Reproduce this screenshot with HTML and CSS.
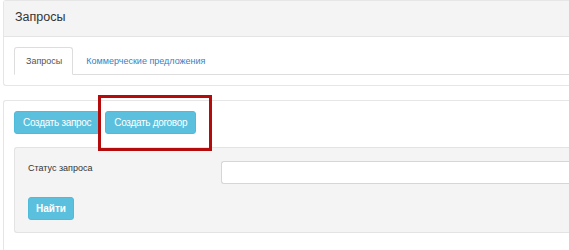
FILE: index.html
```html
<!DOCTYPE html>
<html lang="ru">
<head>
  <meta charset="UTF-8">
  <title>Запросы</title>
  <link rel="stylesheet" href="styles.css">
</head>
<body>
  <div class="page">

    <div class="panel">
      <div class="panel-heading">Запросы</div>
      <div class="panel-body">
        <ul class="tabs">
          <li class="tab active">Запросы</li>
          <li class="tab"><a href="#">Коммерческие предложения</a></li>
        </ul>
      </div>
    </div>

    <div class="panel panel-main">
      <div class="actions">
        <button class="btn">Создать запрос</button>
        <button class="btn">Создать договор</button>
      </div>

      <div class="well">
        <div class="form-row">
          <label class="form-label">Статус запроса</label>
          <input class="form-input" type="text">
        </div>
        <button class="btn btn-bold">Найти</button>
      </div>

      <!-- annotation frame around the second button -->
      <div class="highlight"></div>
    </div>

  </div>
</body>
</html>
```

FILE: styles.css
```css
body {
  margin: 0;
  overflow: hidden;
  background: #fff;
  font-family: "Liberation Sans", Arial, sans-serif;
  color: #333;
}

.page {
  padding-left: 3px;
}

.panel {
  border: 1px solid #e6e6e6;
  border-right: none;
  border-radius: 3px 0 0 3px;
  background: #fff;
}

.panel-heading {
  height: 35px;
  line-height: 33px;
  padding-left: 11px;
  background: #f4f4f4;
  border-bottom: 1px solid #e4e4e4;
  font-size: 12.5px;
  color: #333;
}

.panel-body {
  padding: 10px 0 10px 10px;
}

.tabs {
  display: flex;
  margin: 0;
  padding: 0;
  list-style: none;
  border-bottom: 1px solid #ddd;
}

.tab {
  height: 26px;
  line-height: 26px;
  padding: 0 10px 0 11px;
  margin-bottom: -1px;
  font-size: 9px;
  border: 1px solid transparent;
  border-radius: 3px 3px 0 0;
}

.tab.active {
  color: #555;
  background: #fff;
  border-color: #ddd;
  border-bottom-color: #fff;
}

.tab a {
  color: #3a7fc1;
  text-decoration: none;
  padding-left: 1px;
}

.panel-main {
  position: relative;
  box-sizing: border-box;
  margin-top: 14px;
  height: 150px;
  padding: 10px 0 0 10px;
  border-bottom: none;
  border-radius: 3px 0 0 0;
}

.actions {
  display: flex;
  gap: 5px;
}

.btn {
  height: 23px;
  padding: 0 8px;
  font-family: inherit;
  font-size: 10px;
  letter-spacing: -0.3px;
  color: #fff;
  background: #5bc0de;
  border: 1px solid #4fbbdb;
  border-radius: 3px;
}

.btn-bold {
  font-weight: bold;
  letter-spacing: 0;
  padding: 0 7px;
}

.well {
  margin-top: 13px;
  padding: 13px 0 12px 13px;
  background: #f4f4f4;
  border: 1px solid #e3e3e3;
  border-right: none;
  border-radius: 3px 0 0 3px;
}

.form-row {
  display: flex;
  margin-bottom: 13px;
}

.form-label {
  width: 193px;
  padding-top: 2px;
  font-size: 9px;
  color: #333;
}

.form-input {
  flex: 1;
  height: 23px;
  box-sizing: border-box;
  border: 1px solid #d6d6d6;
  border-right: none;
  border-radius: 3px 0 0 3px;
  background: #fff;
}

.highlight {
  position: absolute;
  left: 94px;
  top: -6px;
  width: 108px;
  height: 50px;
  border: 3px solid #b40c0c;
}
```
